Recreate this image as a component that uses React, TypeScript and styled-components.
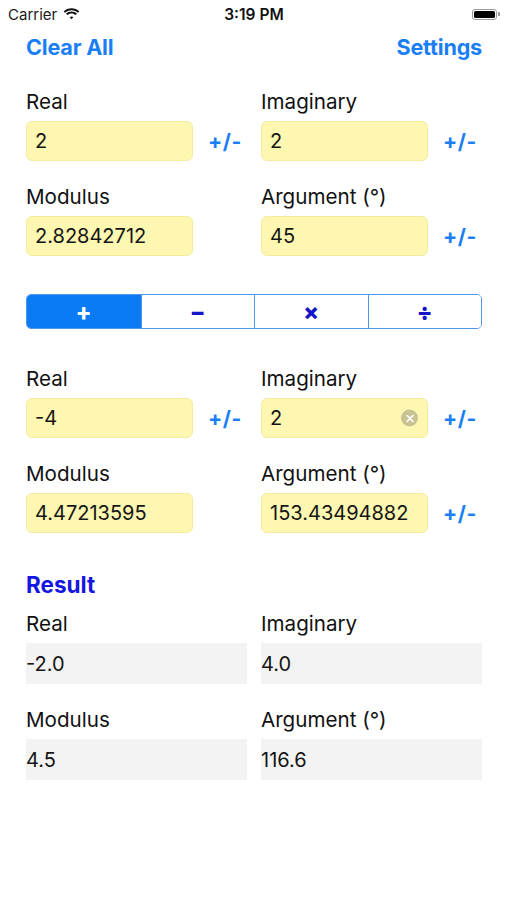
import styled, { createGlobalStyle } from "styled-components";

const GlobalStyle = createGlobalStyle`
  html, body {
    margin: 0;
    padding: 0;
    background: #ffffff;
  }
  body {
    font-family: Inter, "Liberation Sans", sans-serif;
    color: #111111;
  }
`;

const Screen = styled.div`
  width: 507px;
  min-height: 900px;
  background: #ffffff;
`;

// status bar
const StatusBar = styled.div`
  height: 28px;
  display: grid;
  grid-template-columns: 1fr auto 1fr;
  align-items: center;
  padding: 0 7px 0 8px;
  font-size: 15px;
`;

const Carrier = styled.div`
  display: flex;
  align-items: center;
  gap: 6px;
  color: #1a1a1a;
`;

const Clock = styled.div`
  font-weight: 600;
  font-size: 15.5px;
`;

const BatteryWrap = styled.div`
  justify-self: end;
  display: flex;
  align-items: center;
`;

const BatteryBody = styled.div`
  width: 25px;
  height: 11px;
  border-radius: 3px;
  border: 1px solid #9a9a9a;
  padding: 1px;
  box-sizing: border-box;
  display: flex;
`;

const BatteryFill = styled.div`
  flex: 1;
  background: #000;
  border-radius: 1.5px;
`;

const BatteryNub = styled.div`
  width: 2px;
  height: 4px;
  background: #9a9a9a;
  border-radius: 0 1px 1px 0;
  margin-left: 1px;
`;

// top nav
const NavBar = styled.div`
  display: flex;
  justify-content: space-between;
  align-items: center;
  padding: 3px 25px 0 26px;
  height: 31px;
`;

const NavButton = styled.button`
  border: none;
  background: none;
  padding: 0;
  font-family: inherit;
  font-size: 21.6px;
  font-weight: 700;
  color: #1a7ef5;
  letter-spacing: -0.2px;
`;

const Content = styled.div`
  padding: 0 25px 0 26px;
`;

const Section = styled.div<{ $top: number }>`
  margin-top: ${(p) => p.$top}px;
  display: grid;
  grid-template-columns: 221px 221px;
  column-gap: 14px;
  row-gap: 24px;
`;

const Field = styled.div`
  display: flex;
  flex-direction: column;
  gap: 8px;
`;

const Label = styled.div`
  font-size: 20.6px;
  line-height: 23px;
  color: #111;
`;

const InputRow = styled.div`
  display: flex;
  align-items: center;
`;

const InputBox = styled.div`
  position: relative;
  width: 167px;
  height: 40px;
  box-sizing: border-box;
  background: #fdf7b1;
  border: 1px solid #f3ec9e;
  border-radius: 6px;
  display: flex;
  align-items: center;
  padding-left: 8px;
  font-size: 20px;
  color: #151515;
`;

const ClearIcon = styled.span`
  position: absolute;
  right: 9px;
  top: 50%;
  transform: translateY(-50%);
  width: 17px;
  height: 17px;
  border-radius: 50%;
  background: #c9c394;
  display: flex;
  align-items: center;
  justify-content: center;
`;

const PlusMinus = styled.button`
  border: none;
  background: none;
  padding: 0;
  margin-left: 15px;
  font-family: inherit;
  font-size: 21px;
  font-weight: 700;
  color: #1a7ef5;
  letter-spacing: 0.5px;
`;

const Segmented = styled.div`
  margin-top: 38px;
  height: 35px;
  box-sizing: border-box;
  display: grid;
  grid-template-columns: repeat(4, 1fr);
  border: 1px solid #4f98f0;
  border-radius: 5px;
  overflow: hidden;
`;

const Segment = styled.div<{ $active?: boolean }>`
  display: flex;
  align-items: center;
  justify-content: center;
  background: ${(p) => (p.$active ? "#0b7bf5" : "#ffffff")};
  color: ${(p) => (p.$active ? "#ffffff" : "#1414c8")};
  font-size: 23px;
  font-weight: 800;
  & + & {
    border-left: 1px solid #4f98f0;
  }
`;

const ResultTitle = styled.div`
  margin-top: 38px;
  font-size: 22.5px;
  line-height: 28px;
  font-weight: 700;
  color: #1616e2;
`;

const ResultBox = styled.div`
  height: 41px;
  background: #f3f3f3;
  display: flex;
  align-items: center;
  font-size: 20px;
  color: #151515;
`;

type InputField = { label: string; value: string; pm?: boolean; clear?: boolean };

const InputGrid = ({ fields, top }: { fields: InputField[]; top: number }) => (
  <Section $top={top}>
    {fields.map((f) => (
      <Field key={f.label}>
        <Label>{f.label}</Label>
        <InputRow>
          <InputBox>
            {f.value}
            {f.clear && (
              <ClearIcon>
                <svg width="8" height="8" viewBox="0 0 8 8">
                  <path d="M1 1L7 7M7 1L1 7" stroke="#fff" strokeWidth="1.6" strokeLinecap="round" />
                </svg>
              </ClearIcon>
            )}
          </InputBox>
          {f.pm && <PlusMinus>+/-</PlusMinus>}
        </InputRow>
      </Field>
    ))}
  </Section>
);

const Wifi = () => (
  <svg width="17" height="12" viewBox="0 0 17 12">
    <path d="M8.5 2.2c2.5 0 4.8 1 6.5 2.6l1.3-1.4C14.2 1.4 11.5.2 8.5.2S2.8 1.4.7 3.4L2 4.8c1.7-1.6 4-2.6 6.5-2.6z" fill="#111" />
    <path d="M8.5 5.4c1.6 0 3 .6 4.2 1.6L14 5.6c-1.5-1.3-3.4-2.1-5.5-2.1S4.5 4.3 3 5.6L4.3 7c1.2-1 2.6-1.600 4.2-1.6z" fill="#111" />
    <path d="M8.5 8.6c.7 0 1.3.3 1.8.7L8.5 11.3 6.7 9.3c.5-.4 1.1-.7 1.8-.7z" fill="#111" />
  </svg>
);

export default function App() {
  return (
    <Screen>
      <GlobalStyle />
      <StatusBar>
        <Carrier>
          Carrier
          <Wifi />
        </Carrier>
        <Clock>3:19 PM</Clock>
        <BatteryWrap>
          <BatteryBody>
            <BatteryFill />
          </BatteryBody>
          <BatteryNub />
        </BatteryWrap>
      </StatusBar>
      <NavBar>
        <NavButton>Clear All</NavButton>
        <NavButton>Settings</NavButton>
      </NavBar>
      <Content>
        <InputGrid
          top={28}
          fields={[
            { label: "Real", value: "2", pm: true },
            { label: "Imaginary", value: "2", pm: true },
            { label: "Modulus", value: "2.82842712" },
            { label: "Argument (°)", value: "45", pm: true },
          ]}
        />
        <Segmented>
          <Segment $active>+</Segment>
          <Segment>−</Segment>
          <Segment>×</Segment>
          <Segment>÷</Segment>
        </Segmented>
        <InputGrid
          top={38}
          fields={[
            { label: "Real", value: "-4", pm: true },
            { label: "Imaginary", value: "2", pm: true, clear: true },
            { label: "Modulus", value: "4.47213595" },
            { label: "Argument (°)", value: "153.43494882", pm: true },
          ]}
        />
        <ResultTitle>Result</ResultTitle>
        <Section $top={13}>
          {[
            ["Real", "-2.0"],
            ["Imaginary", "4.0"],
            ["Modulus", "4.5"],
            ["Argument (°)", "116.6"],
          ].map(([l, v]) => (
            <Field key={l}>
              <Label>{l}</Label>
              <ResultBox>{v}</ResultBox>
            </Field>
          ))}
        </Section>
      </Content>
    </Screen>
  );
}
